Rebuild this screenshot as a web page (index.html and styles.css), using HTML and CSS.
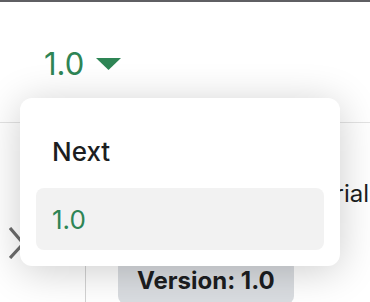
FILE: index.html
```html
<!DOCTYPE html>
<html>
<head>
<meta charset="utf-8">
<link rel="stylesheet" href="styles.css">
</head>
<body>
<div class="topbar"></div>
<header class="navbar">
  <button class="version-toggle">1.0<svg class="caret" width="25" height="12" viewBox="0 0 25 12"><polygon points="0,0 25,0 12.5,12" fill="#2e8555"/></svg></button>
</header>
<div class="page">
  <aside class="sidebar">
    <svg class="close" width="16" height="32" viewBox="0 0 16 32"><path d="M1 1 L13 15 M13 18 L1 31" stroke="#6b6b6b" stroke-width="3.2" fill="none"/></svg>
  </aside>
  <main class="content">
    <p class="lead">Tutorial</p>
    <span class="badge">Version: 1.0</span>
  </main>
</div>
<ul class="dropdown">
  <li class="item">Next</li>
  <li class="item active">1.0</li>
</ul>
</body>
</html>
```

FILE: styles.css
```css
* { box-sizing: border-box; }
html, body { margin: 0; padding: 0; }
body {
  width: 370px;
  height: 302px;
  overflow: hidden;
  background: #fff;
  font-family: Inter, "Noto Sans", sans-serif;
  color: #1c1e21;
  position: relative;
}
.topbar {
  height: 2px;
  background: #5f5f63;
}
.navbar {
  height: 121px;
  border-bottom: 1px solid #e3e3e3;
  display: flex;
  align-items: flex-start;
  padding: 45px 0 0 44px;
}
.version-toggle {
  border: 0;
  background: none;
  padding: 0;
  font-family: inherit;
  font-size: 31px;
  font-weight: 400;
  color: #2e8555;
  display: flex;
  align-items: center;
  gap: 12px;
  line-height: 34px;
}
.page {
  display: flex;
  height: 180px;
}
.sidebar {
  width: 86px;
  border-right: 1px solid #d3d3d3;
  padding: 104px 0 0 9px;
}
.close { display: block; }
.content {
  flex: 1;
  padding-left: 32px;
  display: flex;
  flex-direction: column;
}
.lead {
  margin: 56px 0 0;
  font-size: 24px;
  line-height: 30px;
  text-align: right;
  white-space: nowrap;
  padding-right: 1px;
}
.badge {
  align-self: flex-start;
  margin-top: 50px;
  background: #dadde1;
  border-radius: 8px;
  font-size: 24px;
  font-weight: 700;
  padding: 8px 19px 9px;
  line-height: 28px;
}
.dropdown {
  position: absolute;
  left: 20px;
  top: 98px;
  width: 320px;
  margin: 0;
  list-style: none;
  padding: 16px;
  background: #fff;
  border-radius: 12px;
  box-shadow: 0 5px 40px rgba(0,0,0,0.2);
  display: flex;
  flex-direction: column;
  gap: 6px;
}
.item {
  height: 62px;
  display: flex;
  align-items: center;
  padding-left: 16px;
  font-size: 26px;
  font-weight: 500;
  border-radius: 8px;
}
.item:first-child { margin-top: 6px; }
.item.active {
  background: #f2f2f2;
  color: #2e8555;
  font-weight: 400;
}
```
